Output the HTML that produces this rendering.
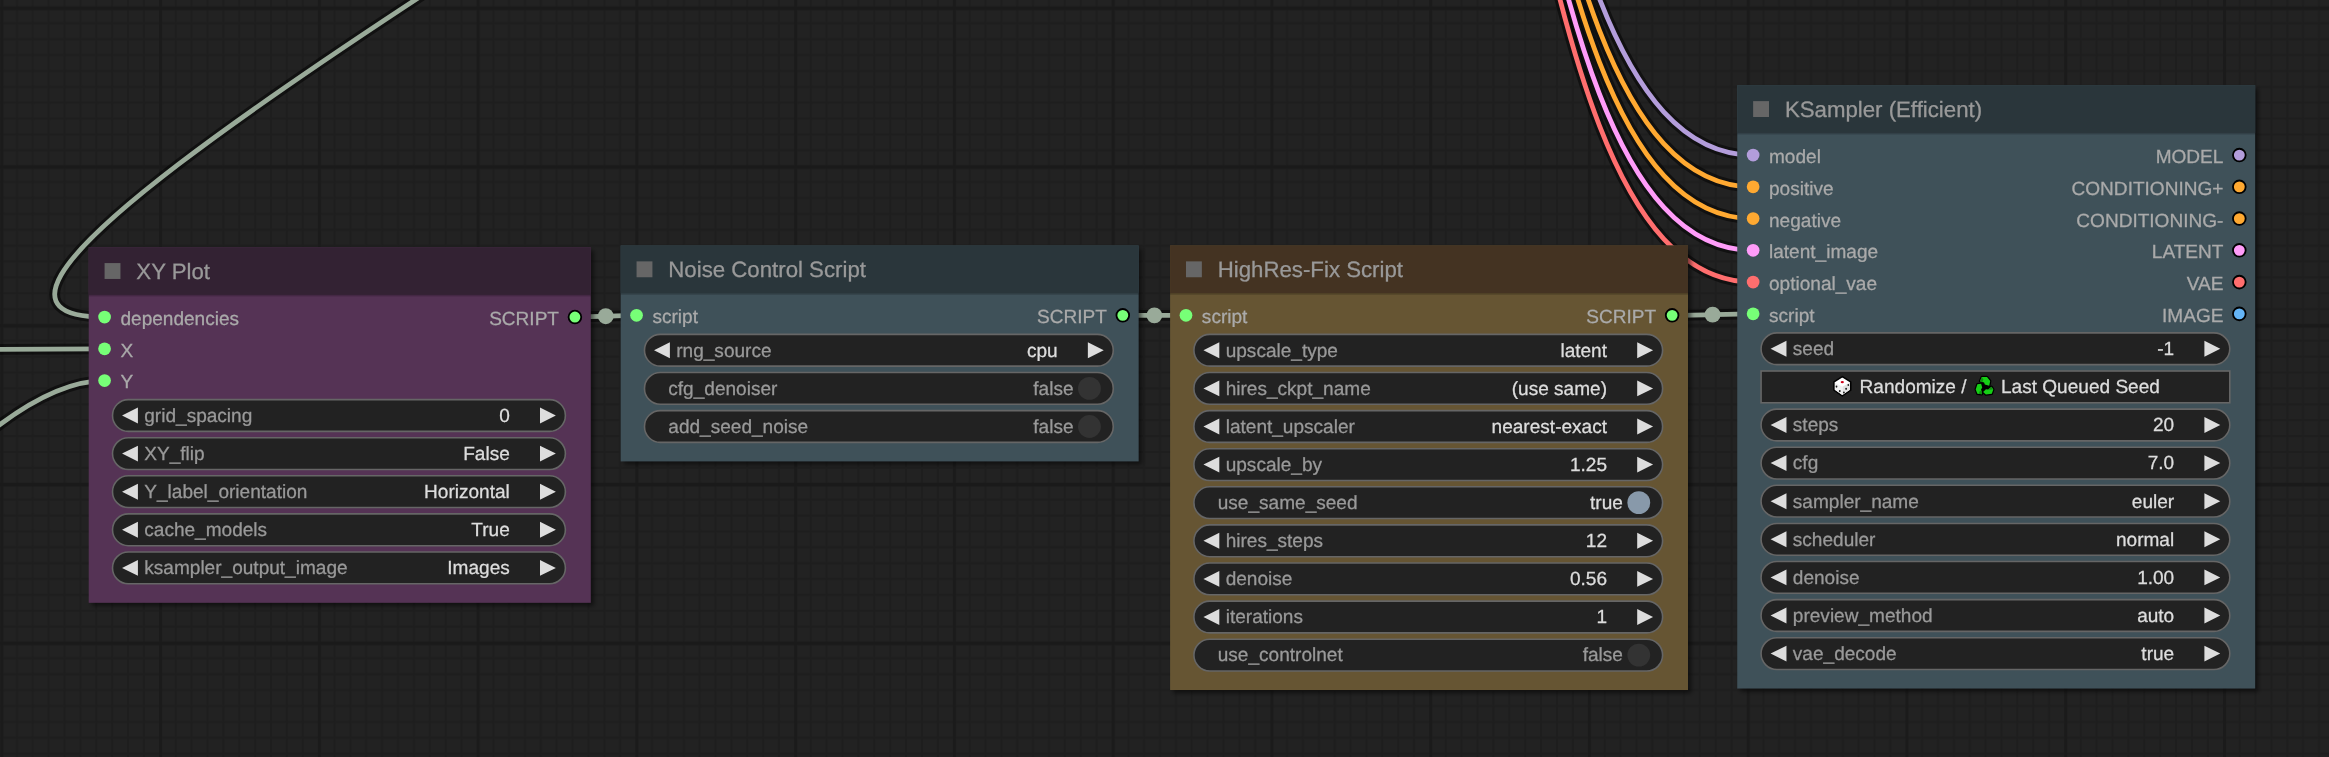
<!DOCTYPE html>
<html><head><meta charset="utf-8"><title>ComfyUI</title>
<style>
html,body{margin:0;padding:0;background:#222;overflow:hidden}
body{width:2329px;height:757px}
svg{display:block;will-change:transform;font-family:"Liberation Sans",sans-serif}
text{white-space:pre;text-rendering:geometricPrecision;stroke-width:.18px}
</style></head><body>
<svg width="2329" height="757" viewBox="0 0 2329 757">
<defs>
<pattern id="grid" width="100" height="100" patternUnits="userSpaceOnUse" x="0.189" y="4.182">
<rect width="100" height="100" fill="#222"/>
<path d="M10.5 0V100M0 10.5H100" stroke="#1e1e1e" stroke-width="1.4"/><path d="M20.5 0V100M0 20.5H100" stroke="#1e1e1e" stroke-width="1.4"/><path d="M30.5 0V100M0 30.5H100" stroke="#1e1e1e" stroke-width="1.4"/><path d="M40.5 0V100M0 40.5H100" stroke="#1e1e1e" stroke-width="1.4"/><path d="M50.5 0V100M0 50.5H100" stroke="#1e1e1e" stroke-width="1.4"/><path d="M60.5 0V100M0 60.5H100" stroke="#1e1e1e" stroke-width="1.4"/><path d="M70.5 0V100M0 70.5H100" stroke="#1e1e1e" stroke-width="1.4"/><path d="M80.5 0V100M0 80.5H100" stroke="#1e1e1e" stroke-width="1.4"/><path d="M90.5 0V100M0 90.5H100" stroke="#1e1e1e" stroke-width="1.4"/>
<path d="M1 0V100M101 0V100" stroke="#1b1b1b" stroke-width="2"/>
<path d="M0 1H100M0 101H100" stroke="#1a1a1a" stroke-width="2.4"/>
</pattern>
<filter id="sh" x="-5%" y="-5%" width="110%" height="110%"><feGaussianBlur stdDeviation="1.5"/></filter>
</defs>
<g transform="scale(1.5876)">
<rect x="0" y="0" width="1467.994" height="477.82" fill="url(#grid)"/>
<g id="links">
<path d="M799.95 -533.515C975.134 -533.515 929.077 97.697 1104.262 97.697" fill="none" stroke="#000" stroke-opacity=".5" stroke-width="6.8"/>
<path d="M799.95 -533.515C975.134 -533.515 929.077 97.697 1104.262 97.697" fill="none" stroke="#B39DDB" stroke-width="3"/>
<circle cx="952.106" cy="-217.909" r="5" fill="#B39DDB"/>
<path d="M799.95 -513.515C975.134 -513.515 929.077 117.697 1104.262 117.697" fill="none" stroke="#000" stroke-opacity=".5" stroke-width="6.8"/>
<path d="M799.95 -513.515C975.134 -513.515 929.077 117.697 1104.262 117.697" fill="none" stroke="#FFA931" stroke-width="3"/>
<circle cx="952.106" cy="-197.909" r="5" fill="#FFA931"/>
<path d="M799.95 -493.515C975.134 -493.515 929.077 137.697 1104.262 137.697" fill="none" stroke="#000" stroke-opacity=".5" stroke-width="6.8"/>
<path d="M799.95 -493.515C975.134 -493.515 929.077 137.697 1104.262 137.697" fill="none" stroke="#FFA931" stroke-width="3"/>
<circle cx="952.106" cy="-177.909" r="5" fill="#FFA931"/>
<path d="M799.95 -473.515C975.134 -473.515 929.077 157.697 1104.262 157.697" fill="none" stroke="#000" stroke-opacity=".5" stroke-width="6.8"/>
<path d="M799.95 -473.515C975.134 -473.515 929.077 157.697 1104.262 157.697" fill="none" stroke="#FF9CF9" stroke-width="3"/>
<circle cx="952.106" cy="-157.909" r="5" fill="#FF9CF9"/>
<path d="M799.95 -453.515C975.134 -453.515 929.077 177.697 1104.262 177.697" fill="none" stroke="#000" stroke-opacity=".5" stroke-width="6.8"/>
<path d="M799.95 -453.515C975.134 -453.515 929.077 177.697 1104.262 177.697" fill="none" stroke="#FF6E6E" stroke-width="3"/>
<circle cx="952.106" cy="-137.909" r="5" fill="#FF6E6E"/>
<path d="M793.651 -416.478C1032.05 -416.478 -172.529 199.707 65.87 199.707" fill="none" stroke="#000" stroke-opacity=".5" stroke-width="6.8"/>
<path d="M793.651 -416.478C1032.05 -416.478 -172.529 199.707 65.87 199.707" fill="none" stroke="#99AA99" stroke-width="3"/>
<circle cx="429.761" cy="-108.385" r="5" fill="#99AA99"/>
<path d="M-251.953 221.718C-172.495 221.718 -13.587 219.707 65.87 219.707" fill="none" stroke="#000" stroke-opacity=".5" stroke-width="6.8"/>
<path d="M-251.953 221.718C-172.495 221.718 -13.587 219.707 65.87 219.707" fill="none" stroke="#99AA99" stroke-width="3"/>
<circle cx="-93.041" cy="220.713" r="5" fill="#99AA99"/>
<path d="M-253.59 477.072C-154.092 477.072 -33.628 239.707 65.87 239.707" fill="none" stroke="#000" stroke-opacity=".5" stroke-width="6.8"/>
<path d="M-253.59 477.072C-154.092 477.072 -33.628 239.707 65.87 239.707" fill="none" stroke="#99AA99" stroke-width="3"/>
<circle cx="-93.86" cy="358.39" r="5" fill="#99AA99"/>
<path d="M362.134 199.707C371.841 199.707 391.241 198.636 400.949 198.636" fill="none" stroke="#000" stroke-opacity=".5" stroke-width="6.8"/>
<path d="M362.134 199.707C371.841 199.707 391.241 198.636 400.949 198.636" fill="none" stroke="#99AA99" stroke-width="3"/>
<circle cx="381.541" cy="199.171" r="5" fill="#99AA99"/>
<path d="M707.221 198.636C717.172 198.636 737.074 198.636 747.024 198.636" fill="none" stroke="#000" stroke-opacity=".5" stroke-width="6.8"/>
<path d="M707.221 198.636C717.172 198.636 737.074 198.636 747.024 198.636" fill="none" stroke="#99AA99" stroke-width="3"/>
<circle cx="727.123" cy="198.636" r="5" fill="#99AA99"/>
<path d="M1053.24 198.636C1065.998 198.636 1091.504 197.697 1104.262 197.697" fill="none" stroke="#000" stroke-opacity=".5" stroke-width="6.8"/>
<path d="M1053.24 198.636C1065.998 198.636 1091.504 197.697 1104.262 197.697" fill="none" stroke="#99AA99" stroke-width="3"/>
<circle cx="1078.751" cy="198.167" r="5" fill="#99AA99"/>
</g>
<g id="nodes">
<g transform="translate(55.87 185.707)">
<rect x="2" y="-28" width="316.264" height="224" fill="#000" fill-opacity=".5" filter="url(#sh)"/>
<rect x="0" y="-30" width="316.264" height="224" fill="#553355"/>
<rect x="0" y="-1" width="316.264" height="2" fill="#000" fill-opacity=".2"/>
<rect x="0" y="-30" width="316.264" height="30" fill="#332233"/>
<rect x="10" y="-20" width="10" height="10" fill="#666"/>
<text x="30" y="-10" fill="#999" stroke="#999" font-size="14">XY Plot</text>
<circle cx="10" cy="14" r="4" fill="#7F7"/>
<text x="20" y="19" fill="#AAA" stroke="#AAA" font-size="12">dependencies</text>
<circle cx="10" cy="34" r="4" fill="#7F7"/>
<text x="20" y="39" fill="#AAA" stroke="#AAA" font-size="12">X</text>
<circle cx="10" cy="54" r="4" fill="#7F7"/>
<text x="20" y="59" fill="#AAA" stroke="#AAA" font-size="12">Y</text>
<circle cx="306.264" cy="14" r="4" fill="#7F7" stroke="#000" stroke-width="1.15"/>
<text x="296.264" y="19" fill="#AAA" stroke="#AAA" font-size="12" text-anchor="end">SCRIPT</text>
<rect x="15" y="66" width="285.264" height="20" rx="10" fill="#222" stroke="#666" stroke-width="1"/>
<path d="M31 71L21 76L31 81Z M284.264 71L294.264 76L284.264 81Z" fill="#DDD"/>
<text x="35" y="80" fill="#999" stroke="#999" font-size="12">grid_spacing</text>
<text x="265.264" y="80" fill="#DDD" stroke="#DDD" font-size="12" text-anchor="end">0</text>
<rect x="15" y="90" width="285.264" height="20" rx="10" fill="#222" stroke="#666" stroke-width="1"/>
<path d="M31 95L21 100L31 105Z M284.264 95L294.264 100L284.264 105Z" fill="#DDD"/>
<text x="35" y="104" fill="#999" stroke="#999" font-size="12">XY_flip</text>
<text x="265.264" y="104" fill="#DDD" stroke="#DDD" font-size="12" text-anchor="end">False</text>
<rect x="15" y="114" width="285.264" height="20" rx="10" fill="#222" stroke="#666" stroke-width="1"/>
<path d="M31 119L21 124L31 129Z M284.264 119L294.264 124L284.264 129Z" fill="#DDD"/>
<text x="35" y="128" fill="#999" stroke="#999" font-size="12">Y_label_orientation</text>
<text x="265.264" y="128" fill="#DDD" stroke="#DDD" font-size="12" text-anchor="end">Horizontal</text>
<rect x="15" y="138" width="285.264" height="20" rx="10" fill="#222" stroke="#666" stroke-width="1"/>
<path d="M31 143L21 148L31 153Z M284.264 143L294.264 148L284.264 153Z" fill="#DDD"/>
<text x="35" y="152" fill="#999" stroke="#999" font-size="12">cache_models</text>
<text x="265.264" y="152" fill="#DDD" stroke="#DDD" font-size="12" text-anchor="end">True</text>
<rect x="15" y="162" width="285.264" height="20" rx="10" fill="#222" stroke="#666" stroke-width="1"/>
<path d="M31 167L21 172L31 177Z M284.264 167L294.264 172L284.264 177Z" fill="#DDD"/>
<text x="35" y="176" fill="#999" stroke="#999" font-size="12">ksampler_output_image</text>
<text x="265.264" y="176" fill="#DDD" stroke="#DDD" font-size="12" text-anchor="end">Images</text>
</g>
<g transform="translate(390.949 184.636)">
<rect x="2" y="-28" width="326.272" height="136" fill="#000" fill-opacity=".5" filter="url(#sh)"/>
<rect x="0" y="-30" width="326.272" height="136" fill="#3f5159"/>
<rect x="0" y="-1" width="326.272" height="2" fill="#000" fill-opacity=".2"/>
<rect x="0" y="-30" width="326.272" height="30" fill="#2a363b"/>
<rect x="10" y="-20" width="10" height="10" fill="#666"/>
<text x="30" y="-10" fill="#999" stroke="#999" font-size="14">Noise Control Script</text>
<circle cx="10" cy="14" r="4" fill="#7F7"/>
<text x="20" y="19" fill="#AAA" stroke="#AAA" font-size="12">script</text>
<circle cx="316.272" cy="14" r="4" fill="#7F7" stroke="#000" stroke-width="1.15"/>
<text x="306.272" y="19" fill="#AAA" stroke="#AAA" font-size="12" text-anchor="end">SCRIPT</text>
<rect x="15" y="26" width="295.272" height="20" rx="10" fill="#222" stroke="#666" stroke-width="1"/>
<path d="M31 31L21 36L31 41Z M294.272 31L304.272 36L294.272 41Z" fill="#DDD"/>
<text x="35" y="40" fill="#999" stroke="#999" font-size="12">rng_source</text>
<text x="275.272" y="40" fill="#DDD" stroke="#DDD" font-size="12" text-anchor="end">cpu</text>
<rect x="15" y="50" width="295.272" height="20" rx="10" fill="#222" stroke="#666" stroke-width="1"/>
<circle cx="295.272" cy="60" r="7.2" fill="#333"/>
<text x="30" y="64" fill="#999" stroke="#999" font-size="12">cfg_denoiser</text>
<text x="285.272" y="64" fill="#999" stroke="#999" font-size="12" text-anchor="end">false</text>
<rect x="15" y="74" width="295.272" height="20" rx="10" fill="#222" stroke="#666" stroke-width="1"/>
<circle cx="295.272" cy="84" r="7.2" fill="#333"/>
<text x="30" y="88" fill="#999" stroke="#999" font-size="12">add_seed_noise</text>
<text x="285.272" y="88" fill="#999" stroke="#999" font-size="12" text-anchor="end">false</text>
</g>
<g transform="translate(737.024 184.636)">
<rect x="2" y="-28" width="326.216" height="280" fill="#000" fill-opacity=".5" filter="url(#sh)"/>
<rect x="0" y="-30" width="326.216" height="280" fill="#665533"/>
<rect x="0" y="-1" width="326.216" height="2" fill="#000" fill-opacity=".2"/>
<rect x="0" y="-30" width="326.216" height="30" fill="#443322"/>
<rect x="10" y="-20" width="10" height="10" fill="#666"/>
<text x="30" y="-10" fill="#999" stroke="#999" font-size="14">HighRes-Fix Script</text>
<circle cx="10" cy="14" r="4" fill="#7F7"/>
<text x="20" y="19" fill="#AAA" stroke="#AAA" font-size="12">script</text>
<circle cx="316.216" cy="14" r="4" fill="#7F7" stroke="#000" stroke-width="1.15"/>
<text x="306.216" y="19" fill="#AAA" stroke="#AAA" font-size="12" text-anchor="end">SCRIPT</text>
<rect x="15" y="26" width="295.216" height="20" rx="10" fill="#222" stroke="#666" stroke-width="1"/>
<path d="M31 31L21 36L31 41Z M294.216 31L304.216 36L294.216 41Z" fill="#DDD"/>
<text x="35" y="40" fill="#999" stroke="#999" font-size="12">upscale_type</text>
<text x="275.216" y="40" fill="#DDD" stroke="#DDD" font-size="12" text-anchor="end">latent</text>
<rect x="15" y="50" width="295.216" height="20" rx="10" fill="#222" stroke="#666" stroke-width="1"/>
<path d="M31 55L21 60L31 65Z M294.216 55L304.216 60L294.216 65Z" fill="#DDD"/>
<text x="35" y="64" fill="#999" stroke="#999" font-size="12">hires_ckpt_name</text>
<text x="275.216" y="64" fill="#DDD" stroke="#DDD" font-size="12" text-anchor="end">(use same)</text>
<rect x="15" y="74" width="295.216" height="20" rx="10" fill="#222" stroke="#666" stroke-width="1"/>
<path d="M31 79L21 84L31 89Z M294.216 79L304.216 84L294.216 89Z" fill="#DDD"/>
<text x="35" y="88" fill="#999" stroke="#999" font-size="12">latent_upscaler</text>
<text x="275.216" y="88" fill="#DDD" stroke="#DDD" font-size="12" text-anchor="end">nearest-exact</text>
<rect x="15" y="98" width="295.216" height="20" rx="10" fill="#222" stroke="#666" stroke-width="1"/>
<path d="M31 103L21 108L31 113Z M294.216 103L304.216 108L294.216 113Z" fill="#DDD"/>
<text x="35" y="112" fill="#999" stroke="#999" font-size="12">upscale_by</text>
<text x="275.216" y="112" fill="#DDD" stroke="#DDD" font-size="12" text-anchor="end">1.25</text>
<rect x="15" y="122" width="295.216" height="20" rx="10" fill="#222" stroke="#666" stroke-width="1"/>
<circle cx="295.216" cy="132" r="7.2" fill="#89A"/>
<text x="30" y="136" fill="#999" stroke="#999" font-size="12">use_same_seed</text>
<text x="285.216" y="136" fill="#DDD" stroke="#DDD" font-size="12" text-anchor="end">true</text>
<rect x="15" y="146" width="295.216" height="20" rx="10" fill="#222" stroke="#666" stroke-width="1"/>
<path d="M31 151L21 156L31 161Z M294.216 151L304.216 156L294.216 161Z" fill="#DDD"/>
<text x="35" y="160" fill="#999" stroke="#999" font-size="12">hires_steps</text>
<text x="275.216" y="160" fill="#DDD" stroke="#DDD" font-size="12" text-anchor="end">12</text>
<rect x="15" y="170" width="295.216" height="20" rx="10" fill="#222" stroke="#666" stroke-width="1"/>
<path d="M31 175L21 180L31 185Z M294.216 175L304.216 180L294.216 185Z" fill="#DDD"/>
<text x="35" y="184" fill="#999" stroke="#999" font-size="12">denoise</text>
<text x="275.216" y="184" fill="#DDD" stroke="#DDD" font-size="12" text-anchor="end">0.56</text>
<rect x="15" y="194" width="295.216" height="20" rx="10" fill="#222" stroke="#666" stroke-width="1"/>
<path d="M31 199L21 204L31 209Z M294.216 199L304.216 204L294.216 209Z" fill="#DDD"/>
<text x="35" y="208" fill="#999" stroke="#999" font-size="12">iterations</text>
<text x="275.216" y="208" fill="#DDD" stroke="#DDD" font-size="12" text-anchor="end">1</text>
<rect x="15" y="218" width="295.216" height="20" rx="10" fill="#222" stroke="#666" stroke-width="1"/>
<circle cx="295.216" cy="228" r="7.2" fill="#333"/>
<text x="30" y="232" fill="#999" stroke="#999" font-size="12">use_controlnet</text>
<text x="285.216" y="232" fill="#999" stroke="#999" font-size="12" text-anchor="end">false</text>
</g>
<g transform="translate(1094.262 83.697)">
<rect x="2" y="-28" width="326.247" height="380" fill="#000" fill-opacity=".5" filter="url(#sh)"/>
<rect x="0" y="-30" width="326.247" height="380" fill="#3f5159"/>
<rect x="0" y="-1" width="326.247" height="2" fill="#000" fill-opacity=".2"/>
<rect x="0" y="-30" width="326.247" height="30" fill="#2a363b"/>
<rect x="10" y="-20" width="10" height="10" fill="#666"/>
<text x="30" y="-10" fill="#999" stroke="#999" font-size="14">KSampler (Efficient)</text>
<circle cx="10" cy="14" r="4" fill="#B39DDB"/>
<text x="20" y="19" fill="#AAA" stroke="#AAA" font-size="12">model</text>
<circle cx="10" cy="34" r="4" fill="#FFA931"/>
<text x="20" y="39" fill="#AAA" stroke="#AAA" font-size="12">positive</text>
<circle cx="10" cy="54" r="4" fill="#FFA931"/>
<text x="20" y="59" fill="#AAA" stroke="#AAA" font-size="12">negative</text>
<circle cx="10" cy="74" r="4" fill="#FF9CF9"/>
<text x="20" y="79" fill="#AAA" stroke="#AAA" font-size="12">latent_image</text>
<circle cx="10" cy="94" r="4" fill="#FF6E6E"/>
<text x="20" y="99" fill="#AAA" stroke="#AAA" font-size="12">optional_vae</text>
<circle cx="10" cy="114" r="4" fill="#7F7"/>
<text x="20" y="119" fill="#AAA" stroke="#AAA" font-size="12">script</text>
<circle cx="316.247" cy="14" r="4" fill="#B39DDB" stroke="#000" stroke-width="1.15"/>
<text x="306.247" y="19" fill="#AAA" stroke="#AAA" font-size="12" text-anchor="end">MODEL</text>
<circle cx="316.247" cy="34" r="4" fill="#FFA931" stroke="#000" stroke-width="1.15"/>
<text x="306.247" y="39" fill="#AAA" stroke="#AAA" font-size="12" text-anchor="end">CONDITIONING+</text>
<circle cx="316.247" cy="54" r="4" fill="#FFA931" stroke="#000" stroke-width="1.15"/>
<text x="306.247" y="59" fill="#AAA" stroke="#AAA" font-size="12" text-anchor="end">CONDITIONING-</text>
<circle cx="316.247" cy="74" r="4" fill="#FF9CF9" stroke="#000" stroke-width="1.15"/>
<text x="306.247" y="79" fill="#AAA" stroke="#AAA" font-size="12" text-anchor="end">LATENT</text>
<circle cx="316.247" cy="94" r="4" fill="#FF6E6E" stroke="#000" stroke-width="1.15"/>
<text x="306.247" y="99" fill="#AAA" stroke="#AAA" font-size="12" text-anchor="end">VAE</text>
<circle cx="316.247" cy="114" r="4" fill="#64B5F6" stroke="#000" stroke-width="1.15"/>
<text x="306.247" y="119" fill="#AAA" stroke="#AAA" font-size="12" text-anchor="end">IMAGE</text>
<rect x="15" y="126" width="295.247" height="20" rx="10" fill="#222" stroke="#666" stroke-width="1"/>
<path d="M31 131L21 136L31 141Z M294.247 131L304.247 136L294.247 141Z" fill="#DDD"/>
<text x="35" y="140" fill="#999" stroke="#999" font-size="12">seed</text>
<text x="275.247" y="140" fill="#DDD" stroke="#DDD" font-size="12" text-anchor="end">-1</text>
<rect x="15" y="150" width="295.247" height="20" fill="#222" stroke="#666" stroke-width="1"/>
<text x="77.066" y="164" fill="#DDD" stroke="#DDD" font-size="12">Randomize /</text>
<text x="166.131" y="164" fill="#DDD" stroke="#DDD" font-size="12">Last Queued Seed</text>
<g transform="translate(57.162 150.619) scale(0.63)"><path d="M14.3 4.6L22.7 9.9V18.2L14.3 23.9L6 18.2V9.9Z" fill="#fff" stroke="#000" stroke-width="1.6" stroke-linejoin="round"/><path d="M14.3 14.8L21.9 10.4V17.8L14.3 23Z" fill="#e2e2e2"/><path d="M14.3 14.8L6.8 10.4V17.8L14.3 23Z" fill="#f0f0f0"/><ellipse cx="14.3" cy="10.1" rx="1.6" ry="1.2" fill="#d0021b"/><g fill="#1a1a1a"><ellipse cx="8.5" cy="14.6" rx=".9" ry="1.1"/><ellipse cx="11.8" cy="19.1" rx=".9" ry="1.1"/><ellipse cx="15.9" cy="20.5" rx=".9" ry="1"/><ellipse cx="18.1" cy="16.8" rx=".9" ry="1.1"/><ellipse cx="20.3" cy="13.1" rx=".8" ry="1"/></g></g>
<g transform="translate(146.605 150.619) scale(0.63)"><path d="M12 9L18 10L19 17L13 20L10 16Z" fill="#000"/><path d="M11.8 5H17L20.2 9.1L19.2 13.7L14.8 12.6L14.1 10.4L10 9.2ZM7.4 12.2L11.1 11.8L12.2 15.5L11.1 17.4L11.8 22.2L7.4 21.8L5.7 17.4ZM13.1 20L15.9 17.2L18.1 17.4L21.5 14.8L23.3 17.4L21.8 21.8L15.9 22.6Z" fill="#000" stroke="#000" stroke-width="2.4" stroke-linejoin="round"/><path d="M11.8 5H17L20.2 9.1L19.2 13.7L14.8 12.6L14.1 10.4L10 9.2ZM7.4 12.2L11.1 11.8L12.2 15.5L11.1 17.4L11.8 22.2L7.4 21.8L5.7 17.4ZM13.1 20L15.9 17.2L18.1 17.4L21.5 14.8L23.3 17.4L21.8 21.8L15.9 22.6Z" fill="#16cf16"/><path d="M11.8 5L13.3 7.4L12.2 10.4L10 9.2Z" fill="#0f8f0f"/><path d="M9.6 19.2L11.8 18.5V22.2L8.9 21.8Z" fill="#0f8f0f"/><path d="M18.1 17.4L21.5 14.8L23.1 17.2L20.7 17.8Z" fill="#0f8f0f"/></g>
<rect x="15" y="174" width="295.247" height="20" rx="10" fill="#222" stroke="#666" stroke-width="1"/>
<path d="M31 179L21 184L31 189Z M294.247 179L304.247 184L294.247 189Z" fill="#DDD"/>
<text x="35" y="188" fill="#999" stroke="#999" font-size="12">steps</text>
<text x="275.247" y="188" fill="#DDD" stroke="#DDD" font-size="12" text-anchor="end">20</text>
<rect x="15" y="198" width="295.247" height="20" rx="10" fill="#222" stroke="#666" stroke-width="1"/>
<path d="M31 203L21 208L31 213Z M294.247 203L304.247 208L294.247 213Z" fill="#DDD"/>
<text x="35" y="212" fill="#999" stroke="#999" font-size="12">cfg</text>
<text x="275.247" y="212" fill="#DDD" stroke="#DDD" font-size="12" text-anchor="end">7.0</text>
<rect x="15" y="222" width="295.247" height="20" rx="10" fill="#222" stroke="#666" stroke-width="1"/>
<path d="M31 227L21 232L31 237Z M294.247 227L304.247 232L294.247 237Z" fill="#DDD"/>
<text x="35" y="236" fill="#999" stroke="#999" font-size="12">sampler_name</text>
<text x="275.247" y="236" fill="#DDD" stroke="#DDD" font-size="12" text-anchor="end">euler</text>
<rect x="15" y="246" width="295.247" height="20" rx="10" fill="#222" stroke="#666" stroke-width="1"/>
<path d="M31 251L21 256L31 261Z M294.247 251L304.247 256L294.247 261Z" fill="#DDD"/>
<text x="35" y="260" fill="#999" stroke="#999" font-size="12">scheduler</text>
<text x="275.247" y="260" fill="#DDD" stroke="#DDD" font-size="12" text-anchor="end">normal</text>
<rect x="15" y="270" width="295.247" height="20" rx="10" fill="#222" stroke="#666" stroke-width="1"/>
<path d="M31 275L21 280L31 285Z M294.247 275L304.247 280L294.247 285Z" fill="#DDD"/>
<text x="35" y="284" fill="#999" stroke="#999" font-size="12">denoise</text>
<text x="275.247" y="284" fill="#DDD" stroke="#DDD" font-size="12" text-anchor="end">1.00</text>
<rect x="15" y="294" width="295.247" height="20" rx="10" fill="#222" stroke="#666" stroke-width="1"/>
<path d="M31 299L21 304L31 309Z M294.247 299L304.247 304L294.247 309Z" fill="#DDD"/>
<text x="35" y="308" fill="#999" stroke="#999" font-size="12">preview_method</text>
<text x="275.247" y="308" fill="#DDD" stroke="#DDD" font-size="12" text-anchor="end">auto</text>
<rect x="15" y="318" width="295.247" height="20" rx="10" fill="#222" stroke="#666" stroke-width="1"/>
<path d="M31 323L21 328L31 333Z M294.247 323L304.247 328L294.247 333Z" fill="#DDD"/>
<text x="35" y="332" fill="#999" stroke="#999" font-size="12">vae_decode</text>
<text x="275.247" y="332" fill="#DDD" stroke="#DDD" font-size="12" text-anchor="end">true</text>
</g>
</g>
</g>
</svg>
</body></html>
